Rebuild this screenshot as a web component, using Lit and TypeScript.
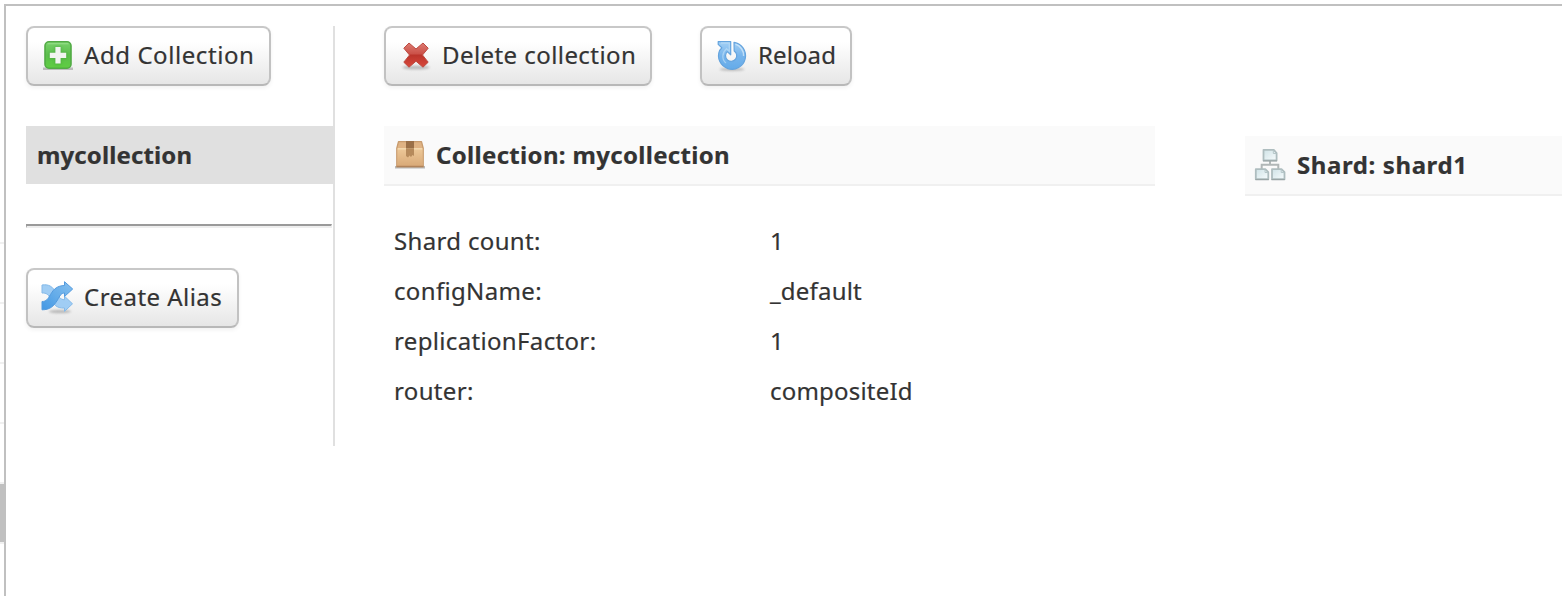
import { LitElement, html, css, svg } from "lit";
import { customElement, property } from "lit/decorators.js";

const icons: Record<string, unknown> = {
  add: svg`
    <defs><linearGradient id="g" x1="0" y1="0" x2="0" y2="1"><stop offset="0" stop-color="#78d16b"/><stop offset=".5" stop-color="#5cbf4c"/><stop offset="1" stop-color="#5fce42"/></linearGradient>
    <filter id="f" x="-20%" y="-20%" width="140%" height="140%"><feGaussianBlur stdDeviation=".8"/></filter></defs>
    <rect x="1" y="27.500" width="30" height="2.500" fill="#888" opacity=".5"/>
    <rect x="3" y="1.800" width="26" height="26.400" rx="4" fill="url(#g)" stroke="#52ab45" stroke-width="1.600"/>
    <path d="M5.500 3.600h21" stroke="#8fdb82" stroke-width="1.500"/>
    <path d="M16 6.500v18M7 15.500h18" stroke="#3f9c34" stroke-width="7" opacity=".45" filter="url(#f)"/>
    <path d="M16 7v16.500M7.800 15.300h16.400" stroke="#f1f4f0" stroke-width="5.200"/>`,
  remove: svg`
    <defs><linearGradient id="g" x1="0" y1="0" x2="0" y2="1"><stop offset="0" stop-color="#dd7b72"/><stop offset=".45" stop-color="#cb5148"/><stop offset=".5" stop-color="#bb342b"/><stop offset="1" stop-color="#d8493c"/></linearGradient>
    <filter id="f" x="-20%" y="-100%" width="140%" height="300%"><feGaussianBlur stdDeviation="1"/></filter></defs>
    <ellipse cx="16" cy="27.500" rx="13.500" ry="2" fill="#888" opacity=".5" filter="url(#f)"/>
    <path d="M9 3 16 9l7-6 5.200 5.200-5.700 6.800 5.700 7.200L23 27.200l-7-6-7 6-5.200-5L9.500 15 3.800 8.200z" fill="url(#g)" stroke="#bd4a41" stroke-width="1" stroke-linejoin="round"/>`,
  reload: svg`
    <defs><linearGradient id="g" x1="0" y1="0" x2="0" y2="1"><stop offset="0" stop-color="#a3d0f5"/><stop offset=".5" stop-color="#78b5ec"/><stop offset="1" stop-color="#64abe9"/></linearGradient>
    <filter id="f" x="-20%" y="-100%" width="140%" height="300%"><feGaussianBlur stdDeviation=".8"/></filter></defs>
    <ellipse cx="16" cy="29.300" rx="12.500" ry="1.600" fill="#888" opacity=".5" filter="url(#f)"/>
    <path d="M18 2.400A13.500 13.500 0 1 1 3.600 10.500L5.800 7.800 2.200 4.400V1.600h12.500v13.200l-3.400-3.200A5.600 5.600 0 1 0 18.200 11z" fill="url(#g)" stroke="#65a4de" stroke-width="1.200" stroke-linejoin="round"/>
    <path d="M5 3h8.300v8.200L10.500 8.700C6 12.500 5.500 19.500 10 23" fill="none" stroke="#b5daf6" stroke-width="1.300" opacity=".75"/>
    <path d="M19.500 4.200A11.800 11.800 0 0 1 27.600 16" fill="none" stroke="#d0e7fa" stroke-width="1.400" opacity=".8"/>`,
  alias: svg`
    <defs><linearGradient id="g" x1="0" y1="1" x2="1" y2="0"><stop offset="0" stop-color="#4297e4"/><stop offset=".5" stop-color="#66ade9"/><stop offset="1" stop-color="#85bfef"/></linearGradient>
    <filter id="f" x="-20%" y="-100%" width="140%" height="300%"><feGaussianBlur stdDeviation="1"/></filter></defs>
    <ellipse cx="18" cy="29.500" rx="11" ry="1.800" fill="#888" opacity=".5" filter="url(#f)"/>
    <path d="M0 3c7-1 10.500 1.500 14 7.500 3 5 4.500 7 8.500 7.200v-3.500L30.500 21.800l-8 7.600v-3.400C14 26.500 11.500 22 8.500 16.500 6 12 4.500 11 0 11z" fill="#a0cdf4" stroke="#84b9e8" stroke-width="1" stroke-linejoin="round"/>
    <path d="M0 19.500c4.500 0 5.800-2.500 8.500-7C12 6.500 15.500 3.800 22.500 3.500V-.3L30.700 7l-8.200 7.500V11c-3.500.3-4.500 2.500-7 7C11.500 24.500 8 27.800 0 27.800z" fill="url(#g)" stroke="#539ade" stroke-width="1" stroke-linejoin="round"/>`,
  box: svg`
    <defs><linearGradient id="g" x1="0" y1="0" x2="0" y2="1"><stop offset="0" stop-color="#edc898"/><stop offset="1" stop-color="#d9aa78"/></linearGradient>
    <filter id="f" x="-20%" y="-100%" width="140%" height="300%"><feGaussianBlur stdDeviation=".7"/></filter></defs>
    <rect x="1" y="27" width="30" height="2.500" fill="#777" opacity=".5" filter="url(#f)"/>
    <path d="M4.500 2.700h23l1.700 6.500v18.500H2.800V9.200z" fill="#dfb384" stroke="#c79a6c" stroke-width="1.300" stroke-linejoin="round"/>
    <path d="M3.400 9.500h25.200v17.300H3.400z" fill="url(#g)"/>
    <path d="M3.700 9.800h24.600" stroke="#f4dab0" stroke-width="1.500"/>
    <path d="M2.600 27.500h26.800" stroke="#b0835a" stroke-width="1.500"/>
    <path d="M12 2h8v7.500h-8z" fill="#9a7048"/>
    <path d="M12 9.500h8V17l-1.500-1-1.500 2-1.500-1.500-1.500 2-2-1.500z" fill="#b68a5b"/>`,
  shard: svg`
    <defs><linearGradient id="g" x1="0" y1="0" x2="1" y2="1"><stop offset="0" stop-color="#cfe2e6"/><stop offset="1" stop-color="#f7fcfd"/></linearGradient></defs>
    <path d="M15 12v4M6.700 20.500V15.700h16.600v4.800" fill="none" stroke="#b1b7b7" stroke-width="2"/>
    <g fill="url(#g)" stroke="#aebdbf" stroke-width="1.800" stroke-linejoin="round">
      <path d="M8.500.8h10.300L21.600 4v7.400H8.500z"/>
      <path d="M.8 20.200h9.500l3 3v7H.8z"/>
      <path d="M17 20.200h9.500l3 3v7H17z"/>
    </g>
    <path d="M8 11.800h14M.5 30.700h13.300M16.500 30.700h13.300" stroke="#9aa5a6" stroke-width="1.300"/>
    <path d="M18.300 1.200v3.300h3M10 20.500v3h3M26.200 20.500v3h3" fill="none" stroke="#b5c6c8" stroke-width="1"/>`,
};

@customElement("ui-icon")
class UiIcon extends LitElement {
  static styles = css`
    :host { display: block; flex: none; width: 32px; height: 32px; }
    svg { display: block; overflow: visible; filter: blur(.45px); }
  `;
  @property() name = "add";
  render() {
    return html`<svg width="32" height="32" viewBox="0 0 32 32">${icons[this.name]}</svg>`;
  }
}

@customElement("app-root")
class AppRoot extends LitElement {
  static styles = css`
    :host { display: block; height: 596px; overflow: hidden; background: #fff; color: #333;
      font: 24px/32px "Noto Sans", "Open Sans", sans-serif; letter-spacing: .34px; -webkit-text-stroke: .2px #333; }
    * { box-sizing: border-box; }
    .page { display: flex; height: 596px; padding-top: 4px; }
    .menu { width: 4px; padding-top: 180px; flex: none; }
    .item { height: 60px; border-bottom: 2px solid #f0f0f0; }
    .item.active { background: #c0c0c0; }
    .content { flex: 1; min-width: 0; display: flex; align-items: flex-start; padding: 20px 0 0 20px;
      border: solid #c0c0c0; border-width: 2px 0 0 2px; }
    .side { width: 309px; height: 420px; flex: none; border-right: 2px solid #e0e0e0;
      display: flex; flex-direction: column; align-items: flex-start; }
    button { display: flex; height: 60px; padding: 0 14px; border: 2px solid #c0c0c0; border-color: #c8c8c8 #c2c2c2 #b8b8b8;
      border-radius: 8px; background: linear-gradient(#fff 0%, #fff 25%, #e6e6e6 100%);
      box-shadow: 0 2px 4px rgba(0,0,0,.06); color: inherit; font: inherit; white-space: nowrap; gap: 10px; }
    button ui-icon { margin-top: 12px; }
    button span { margin-top: 11px; }
    .add { width: 245px; letter-spacing: .57px; }
    .alias { width: 213px; letter-spacing: .46px; }
    .delete { width: 268px; letter-spacing: .43px; }
    .reload { width: 152px; letter-spacing: .1px; }
    .selected { width: 309px; height: 58px; margin-top: 40px; padding: 13px 11px; background: #e0e0e0; font-weight: 700; letter-spacing: .12px; }
    hr { width: 306px; height: 4px; margin: 40px 0; border: solid; border-width: 2px 1px; border-color: #9a9a9a #eee #eee #9a9a9a; }
    .main { width: 771px; margin-left: 49px; flex: none; }
    .actions { display: flex; gap: 48px; }
    .head { display: flex; gap: 10px; height: 60px; padding: 0 10px; border-bottom: 2px solid #f0f0f0; background: #fafafa;
      font-weight: 700; white-space: nowrap; letter-spacing: .32px; }
    .head ui-icon { margin-top: 13px; }
    .head span { margin-top: 13px; }
    .main .head { margin-top: 40px; }
    dl { display: grid; grid-template-columns: 376px 1fr; grid-auto-rows: 50px; align-items: center; margin: 30px 0 0; padding-left: 10px; }
    dt, dd { margin: 0; }
    dd { letter-spacing: .2px; }
    .shards { flex: 1; margin: 110px 0 0 90px; }
    .shards .head { letter-spacing: .6px; }
  `;
  details = [
    ["Shard count", "1"],
    ["configName", "_default"],
    ["replicationFactor", "1"],
    ["router", "compositeId"],
  ];
  render() {
    return html`<div class="page">
      <nav class="menu">
        ${[0, 1, 2, 3, 4, 5].map((i) => html`<div class="item ${i === 5 ? "active" : ""}"></div>`)}
      </nav>
      <main class="content">
        <aside class="side">
          <button class="add"><ui-icon name="add"></ui-icon><span>Add Collection</span></button>
          <div class="selected">mycollection</div>
          <hr />
          <button class="alias"><ui-icon name="alias"></ui-icon><span>Create Alias</span></button>
        </aside>
        <section class="main">
          <div class="actions">
            <button class="delete"><ui-icon name="remove"></ui-icon><span>Delete collection</span></button>
            <button class="reload"><ui-icon name="reload"></ui-icon><span>Reload</span></button>
          </div>
          <div class="head"><ui-icon name="box"></ui-icon><span>Collection: mycollection</span></div>
          <dl>${this.details.map(([k, v]) => html`<dt>${k}:</dt><dd>${v}</dd>`)}</dl>
        </section>
        <section class="shards">
          <div class="head"><ui-icon name="shard"></ui-icon><span>Shard: shard1</span></div>
        </section>
      </main>
    </div>`;
  }
}
